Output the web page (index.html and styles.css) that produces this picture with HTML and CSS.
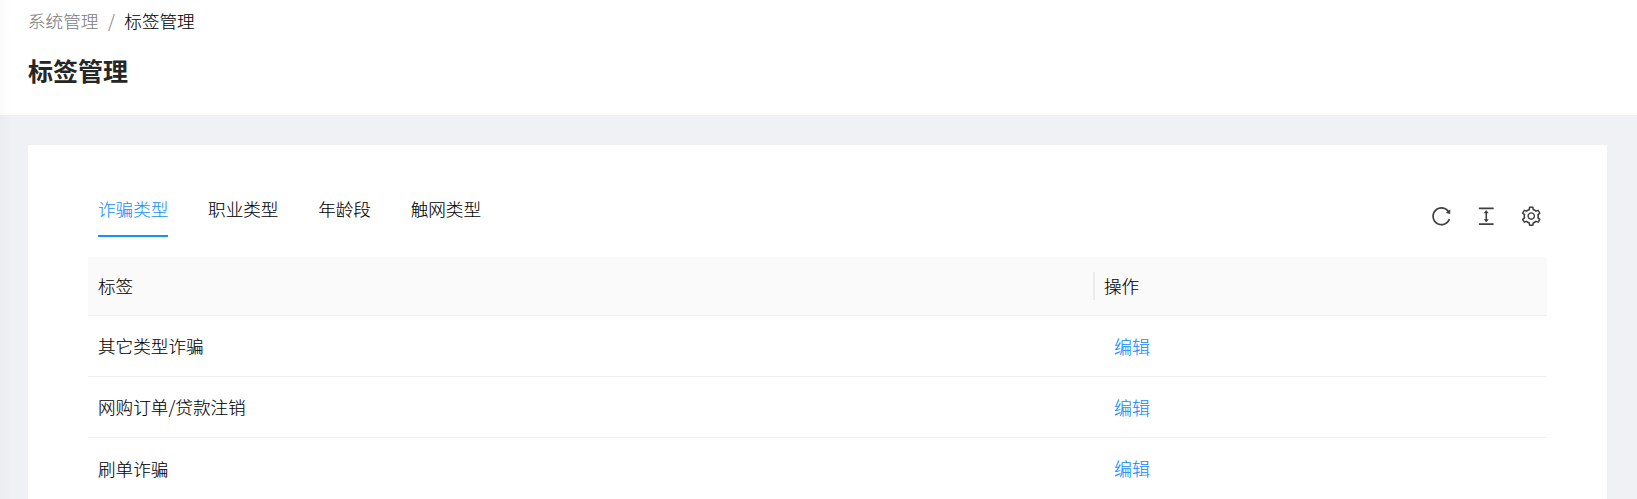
FILE: index.html
```html
<!DOCTYPE html>
<html lang="zh-CN">
<head>
<meta charset="utf-8">
<title>标签管理</title>
<link rel="stylesheet" href="styles.css">
</head>
<body>
<header class="page-header">
  <nav class="breadcrumb"><span class="crumb">系统管理</span><span class="separator">/</span><span class="crumb-current">标签管理</span></nav>
  <h1 class="page-title">标签管理</h1>
</header>
<main class="card">
  <div class="toolbar">
    <div class="tabs">
      <div class="tab tab-active">诈骗类型</div>
      <div class="tab">职业类型</div>
      <div class="tab">年龄段</div>
      <div class="tab">触网类型</div>
    </div>
    <div class="actions">
      <svg class="icon" viewBox="0 0 1024 1024"><path d="M909.1 209.3l-56.4 44.1C775.8 155.1 656.2 92 521.9 92 290 92 102.3 279.5 102 511.5 101.7 743.7 289.8 932 521.9 932c181.3 0 335.8-115 394.6-276.1 1.5-4.2-.7-8.9-4.9-10.3l-56.7-19.5a8 8 0 00-10.1 4.8c-1.8 5-3.8 10-5.9 14.9-17.3 41-42.1 77.8-73.7 109.4A344.77 344.77 0 01655.9 829c-42.3 17.9-87.4 27-133.8 27-46.5 0-91.5-9.1-133.8-27A341.5 341.5 0 01279 755.2a342.16 342.16 0 01-73.7-109.4c-17.9-42.4-27-87.4-27-133.9s9.1-91.5 27-133.9c17.3-41 42.1-77.8 73.7-109.4 31.6-31.6 68.4-56.4 109.3-73.8 42.3-17.9 87.4-27 133.8-27 46.5 0 91.5 9.1 133.8 27a341.5 341.5 0 01109.3 73.8c9.9 9.9 19.2 20.4 27.8 31.4l-60.2 47a8 8 0 003 14.1l175.6 43c5 1.2 9.9-2.6 9.9-7.7l.8-180.9c-.1-6.6-7.8-10.3-13-6.2z"/></svg>
      <svg class="icon" viewBox="0 0 1024 1024"><path d="M840 836H184c-4.4 0-8 3.6-8 8v60c0 4.400 3.600 8 8 8h656c4.400 0 8-3.600 8-8v-60c0-4.400-3.600-8-8-8zm0-724H184c-4.400 0-8 3.600-8 8v60c0 4.400 3.600 8 8 8h656c4.400 0 8-3.600 8-8v-60c0-4.400-3.600-8-8-8zM610.800 378c6 0 9.400-7 5.700-11.700L515.700 238.700a7.140 7.140 0 00-11.300 0L403.600 366.300a7.230 7.230 0 005.700 11.700H476v268h-62.800c-6 0-9.400 7-5.700 11.700l100.800 127.500c2.900 3.700 8.500 3.700 11.300 0l100.800-127.500c3.700-4.700.4-11.700-5.700-11.700H548V378h62.800z"/></svg>
      <svg class="icon" viewBox="0 0 1024 1024"><path d="M924.8 625.7l-65.5-56c3.1-19 4.700-38.400 4.700-57.800s-1.600-38.800-4.700-57.800l65.500-56a32.030 32.030 0 009.300-35.200l-.9-2.600a443.740 443.740 0 00-79.700-137.900l-1.800-2.100a32.120 32.120 0 00-35.100-9.500l-81.300 28.900c-30-24.600-63.500-44-99.700-57.600l-15.700-85a32.050 32.050 0 00-25.800-25.700l-2.700-.5c-52.100-9.400-106.900-9.400-159 0l-2.700.5a32.050 32.050 0 00-25.800 25.700l-15.800 85.400a351.860 351.860 0 00-99 57.400l-81.900-29.100a32 32 0 00-35.100 9.500l-1.800 2.100a446.020 446.020 0 00-79.700 137.900l-.9 2.600c-4.500 12.500-.8 26.500 9.300 35.200l66.300 56.600c-3.100 18.800-4.600 38-4.600 57.100 0 19.200 1.500 38.400 4.600 57.100L99 625.500a32.030 32.030 0 00-9.300 35.200l.9 2.600c18.100 50.400 44.900 96.900 79.700 137.900l1.800 2.100a32.120 32.120 0 0035.100 9.500l81.900-29.100c29.800 24.500 63.100 43.900 99 57.400l15.800 85.400a32.050 32.050 0 0025.800 25.700l2.700.5a449.400 449.400 0 00159 0l2.700-.5a32.050 32.050 0 0025.800-25.700l15.700-85a350 350 0 0099.700-57.600l81.300 28.900a32 32 0 0035.100-9.500l1.800-2.100c34.800-41.100 61.600-87.500 79.700-137.900l.9-2.600c4.500-12.300.8-26.300-9.300-35zM788.300 465.900c2.500 15.100 3.800 30.600 3.800 46.100s-1.300 31-3.800 46.100l-6.600 40.100 74.700 63.900a370.030 370.030 0 01-42.600 73.600L721 702.800l-31.400 25.800c-23.900 19.600-50.500 35-79.300 45.800l-38.100 14.300-17.900 97a377.500 377.500 0 01-85 0l-17.900-97.200-37.800-14.500c-28.500-10.800-55-26.200-78.700-45.700l-31.400-25.900-93.400 33.200c-17-22.900-31.200-47.600-42.600-73.600l75.500-64.500-6.500-40c-2.400-14.900-3.700-30.300-3.700-45.500 0-15.300 1.200-30.600 3.700-45.500l6.500-40-75.500-64.500c11.300-26.100 25.600-50.700 42.600-73.600l93.400 33.200 31.400-25.900c23.700-19.500 50.200-34.900 78.700-45.700l37.900-14.300 17.900-97.200c28.100-3.200 56.800-3.200 85 0l17.900 97 38.100 14.300c28.700 10.800 55.400 26.200 79.300 45.800l31.400 25.800 92.800-32.900c17 22.900 31.200 47.600 42.600 73.600L781.800 426l6.500 39.900zM512 326c-97.200 0-176 78.800-176 176s78.800 176 176 176 176-78.800 176-176-78.800-176-176-176zm79.200 255.200A111.600 111.600 0 01512 614c-29.900 0-58-11.700-79.200-32.800A111.600 111.600 0 01400 502c0-29.900 11.700-58 32.800-79.200C454 401.600 482.100 390 512 390c29.900 0 58 11.600 79.200 32.800A111.600 111.600 0 01624 502c0 29.900-11.700 58-32.800 79.200z"/></svg>
    </div>
  </div>
  <div class="table">
    <div class="row row-head"><div class="cell">标签</div><div class="cell cell-head-action">操作</div></div>
    <div class="row"><div class="cell">其它类型诈骗</div><div class="cell"><a class="link">编辑</a></div></div>
    <div class="row"><div class="cell">网购订单/贷款注销</div><div class="cell"><a class="link">编辑</a></div></div>
    <div class="row row-last"><div class="cell">刷单诈骗</div><div class="cell"><a class="link">编辑</a></div></div>
  </div>
</main>
<div class="edge-shadow"></div>
</body>
</html>
```
FILE: styles.css
```css
* { box-sizing: border-box; }

body {
  margin: 0;
  height: 499px;
  overflow: hidden;
  background: #f0f1f5;
  color: #000;
  font-family: "Noto Sans CJK SC", sans-serif;
  font-size: 17.6px;
  font-weight: 300;
  line-height: 28px;
  -webkit-text-stroke: 0.1px;
}

.page-header {
  height: 115px;
  padding: 7px 28px 0;
  background: #fff;
}

.breadcrumb { display: flex; height: 28px; font-size: 17.6px; }
.crumb, .separator { color: #808080; }
.separator { margin: 0 9.5px; }

.page-title {
  margin: 15px 0 0;
  color: #262626;
  font-size: 25px;
  font-weight: 700;
  line-height: 40px;
  -webkit-text-stroke: 0;
}

.card {
  height: 354px;
  margin: 30px 30px 0 28px;
  padding: 30px 60px 0;
  background: #fff;
  border-radius: 2px 2px 0 0;
}

.toolbar {
  display: flex;
  justify-content: space-between;
  height: 82px;
  padding: 20px 4.5px 0 10px;
}

.tabs { display: flex; gap: 39.7px; height: 42px; font-size: 17.6px; }
.tab { height: 42px; }
.tab-active { color: #1890ff; border-bottom: 2px solid #1890ff; }

.actions { display: flex; gap: 22.5px; padding-top: 9.5px; }
.icon { width: 22.5px; height: 22.5px; fill: #404040; }

.row {
  display: grid;
  grid-template-columns: 1006px 1fr;
  align-items: center;
  height: 61px;
  border-bottom: 1px solid #f0f0f0;
}

.row-head {
  height: 59px;
  background: #fafafa;
  border-radius: 2px 2px 0 0;
}

.row-last { border-bottom: 0; }

.cell { padding-left: 10px; }

.cell-head-action {
  margin-left: -1px;
  padding-left: 9px;
  border-left: 2px solid #ebebeb;
}

.link { margin-left: 10px; color: #1088ff; font-size: 18px; }

.edge-shadow {
  position: absolute;
  top: 0;
  left: 0;
  width: 10px;
  height: 499px;
  background: linear-gradient(90deg, rgba(0, 21, 41, 0.025), rgba(0, 21, 41, 0));
}
```
